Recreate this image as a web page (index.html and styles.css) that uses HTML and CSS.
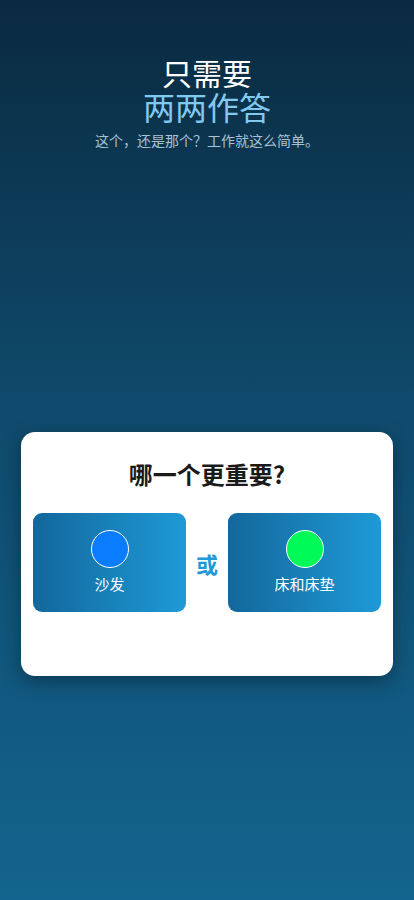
FILE: index.html
```html
<!DOCTYPE html>
<html lang="zh-CN">
<head>
    <meta charset="UTF-8">
    <meta name="viewport" content="width=device-width, initial-scale=1.0">
    <title>两两作答</title>
    <link rel="stylesheet" href="styles.css">
</head>
<body>
    <div class="hero">
        <h1 class="hero-title">只需要</h1>
        <h2 class="hero-accent">两两作答</h2>
        <p class="hero-sub">这个，还是那个？工作就这么简单。</p>
    </div>

    <!-- 问题卡片 -->
    <div class="question-card">
        <div class="question-title">哪一个更重要?</div>
        <div class="choices">
            <div class="choice">
                <span class="dot dot-blue"></span>
                <span class="choice-label">沙发</span>
            </div>
            <div class="or">或</div>
            <div class="choice">
                <span class="dot dot-green"></span>
                <span class="choice-label">床和床垫</span>
            </div>
        </div>
    </div>
</body>
</html>
```

FILE: styles.css
```css
body {
    font-family: "Noto Sans CJK SC", "Noto Sans", sans-serif;
    margin: 0;
    padding: 0;
    min-height: 900px;
    background: linear-gradient(to bottom, #0a2a40 0%, #0f4a6c 45%, #13648e 100%);
    color: white;
}

.hero {
    padding-top: 56px;
    text-align: center;
}

.hero-title {
    margin: 0;
    font-size: 30px;
    font-weight: 400;
    line-height: 32px;
    color: #ffffff;
}

.hero-accent {
    margin: 1px 0 0;
    font-size: 32px;
    font-weight: 400;
    line-height: 34px;
    color: #82c9ef;
}

.hero-sub {
    margin: 8px 0 0;
    font-size: 14px;
    line-height: 18px;
    color: #a8c3d5;
}

/* 问题卡片 */
.question-card {
    margin: 283px 21px 0;
    padding: 26px 12px 64px;
    background: white;
    border-radius: 14px;
    box-shadow: 0 6px 20px rgba(0, 0, 0, 0.35);
}

.question-title {
    text-align: center;
    font-size: 24px;
    font-weight: bold;
    line-height: 32px;
    color: #1a1a1a;
}

.choices {
    display: flex;
    align-items: center;
    margin-top: 23px;
}

.choice {
    flex: 1;
    height: 99px;
    border-radius: 9px;
    background: linear-gradient(to right, #13679b, #1e9ad7);
    display: flex;
    flex-direction: column;
    align-items: center;
    padding-top: 17px;
    box-sizing: border-box;
}

.dot {
    width: 36px;
    height: 36px;
    border-radius: 50%;
    border: 1.5px solid #ffffff;
}

.dot-blue {
    background-color: #0a7cff;
}

.dot-green {
    background-color: #00fb58;
}

.choice-label {
    margin-top: 5px;
    font-size: 15px;
    line-height: 22px;
    color: white;
}

.or {
    width: 42px;
    text-align: center;
    font-size: 22px;
    font-weight: bold;
    color: #1e9ad6;
}
```
